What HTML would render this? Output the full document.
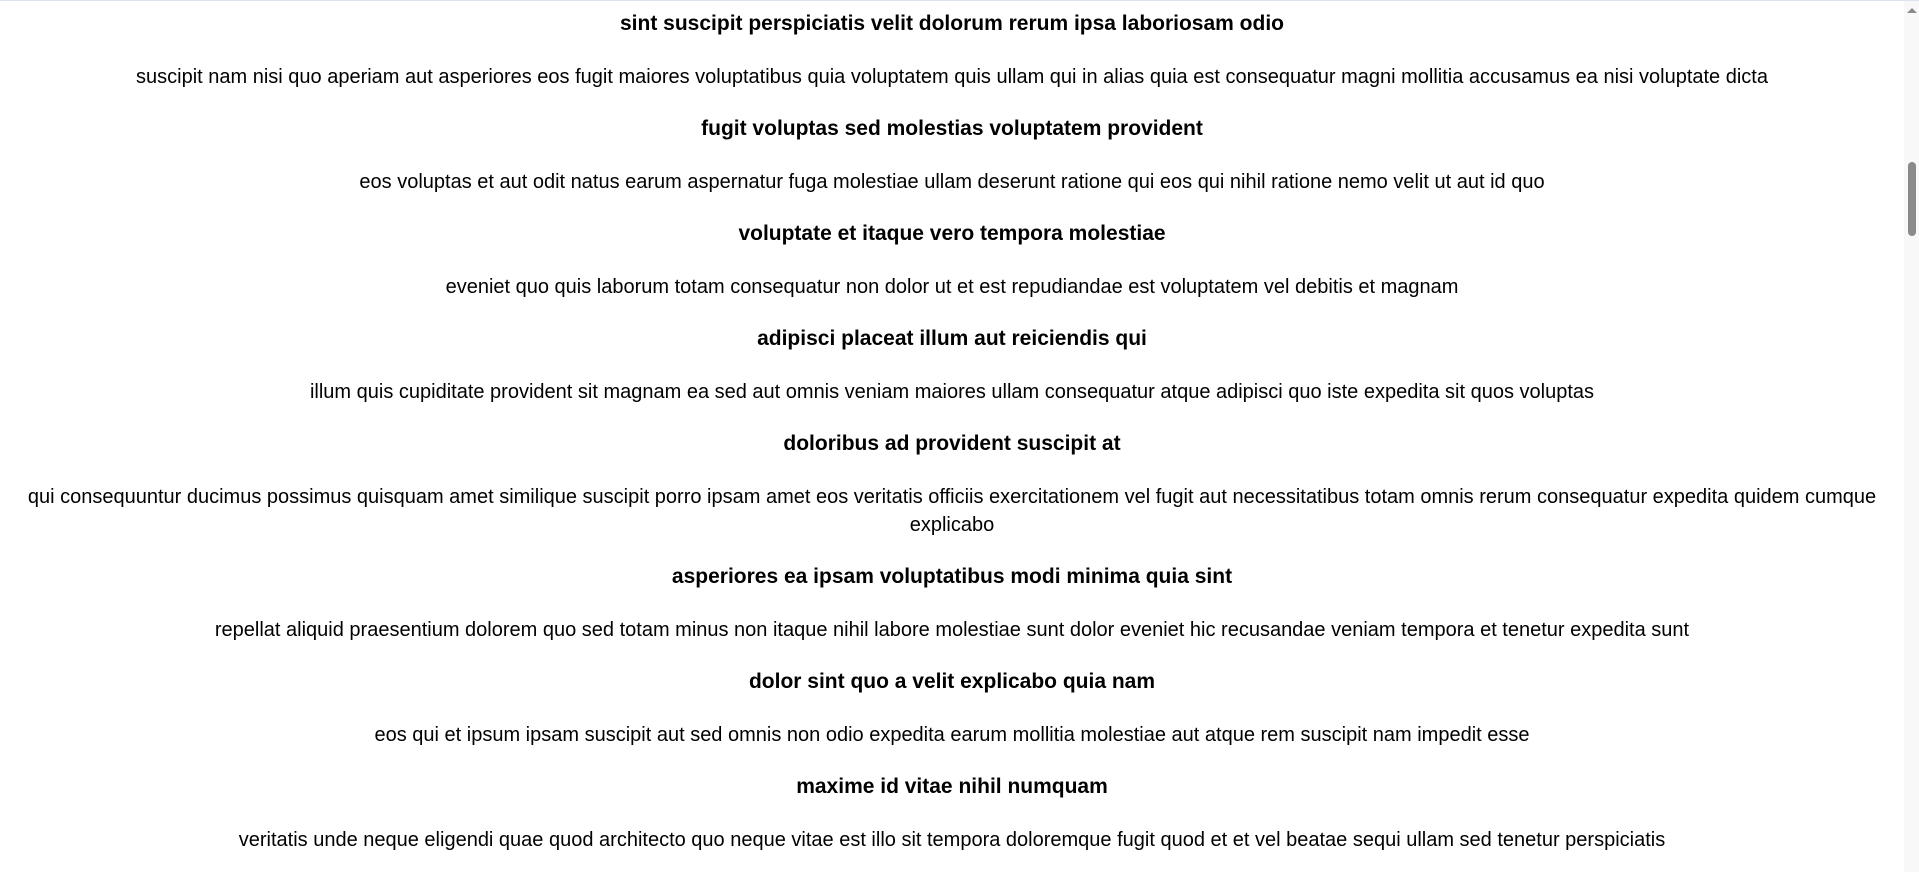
<!DOCTYPE html>
<html><head><meta charset="utf-8"><style>
html,body{margin:0;padding:0;background:#fff;overflow:hidden}
body{width:1919px;height:872px;position:relative;font-family:"Liberation Sans",sans-serif;color:#000;border-top:1px solid #dde3ea;box-sizing:border-box}
.c{position:absolute;left:0;top:8px;width:1904px;text-align:center}
h2{font-size:21px;font-weight:bold;line-height:30px;margin:0 0 24px}
p{font-size:20px;line-height:28px;margin:0 0 23px;padding:0 6px;white-space:nowrap}
.sb{position:absolute;right:0;top:0;width:15px;height:872px;background:#f8f8f8}
.th{position:absolute;left:4px;top:161px;width:8px;height:74px;background:#8a8a8a;border-radius:4px}
.ar{position:absolute;left:3px;top:7px;width:0;height:0;border-left:5px solid transparent;border-right:5px solid transparent;border-bottom:5px solid #8a8a8a}
</style></head><body>
<div class="c">
<h2>sint suscipit perspiciatis velit dolorum rerum ipsa laboriosam odio</h2>
<p>suscipit nam nisi quo aperiam aut asperiores eos fugit maiores voluptatibus quia voluptatem quis ullam qui in alias quia est consequatur magni mollitia accusamus ea nisi voluptate dicta</p>
<h2>fugit voluptas sed molestias voluptatem provident</h2>
<p>eos voluptas et aut odit natus earum aspernatur fuga molestiae ullam deserunt ratione qui eos qui nihil ratione nemo velit ut aut id quo</p>
<h2>voluptate et itaque vero tempora molestiae</h2>
<p>eveniet quo quis laborum totam consequatur non dolor ut et est repudiandae est voluptatem vel debitis et magnam</p>
<h2>adipisci placeat illum aut reiciendis qui</h2>
<p>illum quis cupiditate provident sit magnam ea sed aut omnis veniam maiores ullam consequatur atque adipisci quo iste expedita sit quos voluptas</p>
<h2>doloribus ad provident suscipit at</h2>
<p>qui consequuntur ducimus possimus quisquam amet similique suscipit porro ipsam amet eos veritatis officiis exercitationem vel fugit aut necessitatibus totam omnis rerum consequatur expedita quidem cumque<br>explicabo</p>
<h2>asperiores ea ipsam voluptatibus modi minima quia sint</h2>
<p>repellat aliquid praesentium dolorem quo sed totam minus non itaque nihil labore molestiae sunt dolor eveniet hic recusandae veniam tempora et tenetur expedita sunt</p>
<h2>dolor sint quo a velit explicabo quia nam</h2>
<p>eos qui et ipsum ipsam suscipit aut sed omnis non odio expedita earum mollitia molestiae aut atque rem suscipit nam impedit esse</p>
<h2>maxime id vitae nihil numquam</h2>
<p>veritatis unde neque eligendi quae quod architecto quo neque vitae est illo sit tempora doloremque fugit quod et et vel beatae sequi ullam sed tenetur perspiciatis</p>
</div>
<div class="sb"><div class="ar"></div><div class="th"></div></div>
</body></html>
